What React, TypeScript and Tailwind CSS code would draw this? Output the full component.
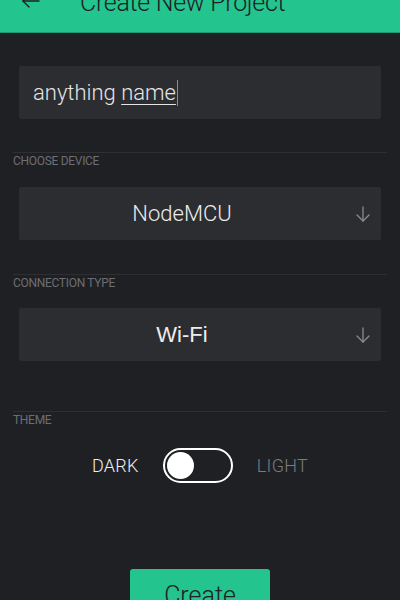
import { useState } from 'react';

function DownArrow() {
  return (
    <svg width="18" height="18" viewBox="0 0 18 18" fill="none" stroke="#8a8c90" strokeWidth="1.3" strokeLinecap="round" strokeLinejoin="round">
      <path d="M9 2v14" />
      <path d="M3 10l6 6 6-6" />
    </svg>
  );
}

function Select({ value, font }: { value: string; font: string }) {
  return (
    <div className="mx-[19px] h-[53px] rounded-[2px] bg-[#2c2d31] flex items-center justify-center pr-[36px] relative">
      <span className={`text-[#ececec] ${font}`}>{value}</span>
      <span className="absolute right-[9px] top-[18px]">
        <DownArrow />
      </span>
    </div>
  );
}

function SectionLabel({ children }: { children: string }) {
  return (
    <div className="mx-[13px] border-t border-[#2e2f33] pt-[2px] text-[12px] leading-[13px] tracking-[-0.3px] text-[#6c6e73] uppercase">
      {children}
    </div>
  );
}

export default function App() {
  const [dark, setDark] = useState(true);

  return (
    <div className="w-[400px] h-[600px] overflow-hidden bg-[#1f2024] font-['Roboto',sans-serif]">
      {/* Header, scrolled partially out of view */}
      <header className="h-[33px] overflow-hidden bg-[#23c48e] border-b border-[#1a9a6f]">
        <div className="h-[56px] -mt-[25px] flex items-center px-[22px] gap-[40px]">
          <svg width="18" height="14" viewBox="0 0 18 14" fill="none" stroke="#1f2024" strokeWidth="1.4" strokeLinecap="round" strokeLinejoin="round" className="-mt-[4px]">
            <path d="M17 7H1" />
            <path d="M7 1L1 7l6 6" />
          </svg>
          <h1 className="text-[25px] tracking-[-0.3px] text-[#1f2024] font-light">Create New Project</h1>
        </div>
      </header>

      <div className="pt-[33px]">
        <div className="mx-[19px] h-[53px] rounded-[2px] bg-[#2c2d31] flex items-center px-[14px]">
          <span className="text-[22px] font-light text-[#e4e4e4]">
            anything <span className="underline underline-offset-[4px] decoration-[1px]">name</span>
          </span>
          <span className="w-[1px] h-[26px] bg-[#8a8c90] ml-[1px]" />
        </div>

        <div className="mt-[33px]">
          <SectionLabel>Choose device</SectionLabel>
        </div>
        <div className="mt-[19px]">
          <Select value="NodeMCU" font="text-[22px] font-light" />
        </div>

        <div className="mt-[34px]">
          <SectionLabel>Connection type</SectionLabel>
        </div>
        <div className="mt-[18px]">
          <Select value="Wi-Fi" font="font-['Liberation_Sans',sans-serif] text-[22px]" />
        </div>

        <div className="mt-[50px]">
          <SectionLabel>Theme</SectionLabel>
        </div>

        <div className="mt-[21px] flex items-center justify-center gap-[24px]">
          <span className={`text-[18px] tracking-[0.3px] font-light ${dark ? 'text-[#eeeeee]' : 'text-[#7a7c80]'}`}>DARK</span>
          <button
            onClick={() => setDark(!dark)}
            className="w-[70px] h-[35px] rounded-full border-[2px] border-white flex items-center px-[2px]"
          >
            <span className={`w-[27px] h-[27px] rounded-full bg-white transition-transform ${dark ? '' : 'translate-x-[35px]'}`} />
          </button>
          <span className={`text-[18px] tracking-[0.3px] font-light ${dark ? 'text-[#7a7c80]' : 'text-[#eeeeee]'}`}>LIGHT</span>
        </div>

        <div className="mt-[86px] flex justify-center">
          <button className="w-[140px] h-[48px] rounded-[3px] bg-[#23c48e] text-[25px] font-light text-[#1f2024] pt-[6px]">
            Create
          </button>
        </div>
      </div>
    </div>
  );
}
